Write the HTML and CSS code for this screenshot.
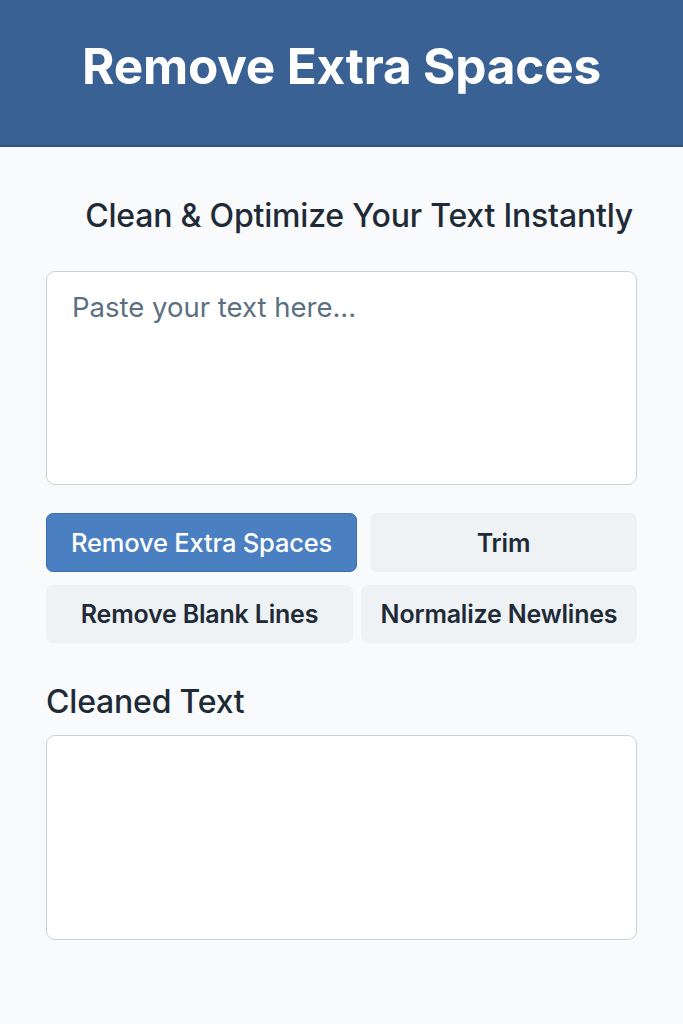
FILE: index.html
```html
<!DOCTYPE html>
<html lang="en">
<head>
<meta charset="utf-8">
<title>Remove Extra Spaces</title>
<link rel="stylesheet" href="styles.css">
</head>
<body>
<header class="header">
  <h1 class="title">Remove Extra Spaces</h1>
</header>
<main class="main">
  <h2 class="subtitle">Clean &amp; Optimize Your Text Instantly</h2>
  <textarea class="box box-input" placeholder="Paste your text here..."></textarea>
  <div class="row row-1">
    <button class="btn btn-primary">Remove Extra Spaces</button>
    <button class="btn">Trim</button>
  </div>
  <div class="row row-2">
    <button class="btn">Remove Blank Lines</button>
    <button class="btn">Normalize Newlines</button>
  </div>
  <h3 class="section-title">Cleaned Text</h3>
  <textarea class="box box-output"></textarea>
</main>
</body>
</html>
```
FILE: styles.css
```css
* { box-sizing: border-box; }
html, body { margin: 0; padding: 0; }
body {
  background: #f8fafc;
  font-family: Inter, "Noto Sans", sans-serif;
  color: #1f2a37;
  width: 683px;
  min-height: 1024px;
}
.header {
  background: #3a6194;
  height: 147px;
  border-bottom: 2px solid #2f5283;
  display: flex;
  align-items: center;
  justify-content: center;
  padding-bottom: 14px;
}
.title {
  margin: 0;
  color: #ffffff;
  font-size: 49.5px;
  font-weight: 700;
  letter-spacing: -0.2px;
}
.main {
  padding: 0 46px;
}
.subtitle {
  margin: 0;
  padding-top: 49px;
  height: 124px;
  text-align: right;
  padding-right: 4px;
  font-size: 32px;
  font-weight: 500;
  color: #1f2a37;
  letter-spacing: -0.2px;
}
.box {
  display: block;
  width: 100%;
  background: #ffffff;
  border: 1.5px solid #cbd2db;
  border-radius: 9px;
  resize: none;
  font-family: Inter, "Noto Sans", sans-serif;
  font-size: 27.5px;
  padding: 18px 25px;
  outline: none;
}
.box::placeholder { color: #5b6f82; }
.box-input { height: 214px; }
.box-output { height: 205px; }
.row {
  display: grid;
}
.row-1 {
  margin-top: 28px;
  grid-template-columns: 311fr 267fr;
  gap: 13px;
}
.row-2 {
  margin-top: 13px;
  grid-template-columns: 307fr 276fr;
  gap: 8px;
}
.btn {
  height: 59px;
  border: 1px solid transparent;
  border-radius: 7px;
  background: #eff2f5;
  color: #1f2a37;
  font-family: Inter, "Noto Sans", sans-serif;
  font-size: 25px;
  font-weight: 600;
  padding: 0;
  letter-spacing: -0.2px;
}
.row-2 .btn { height: 58px; }
.btn-primary {
  background: #4a7fc1;
  border-color: #3b6db0;
  color: #ffffff;
  font-size: 25.5px;
  font-weight: 500;
}
.section-title {
  margin: 0;
  padding-top: 39px;
  height: 92px;
  font-size: 32px;
  font-weight: 500;
  color: #1f2a37;
  letter-spacing: -0.2px;
}
```
